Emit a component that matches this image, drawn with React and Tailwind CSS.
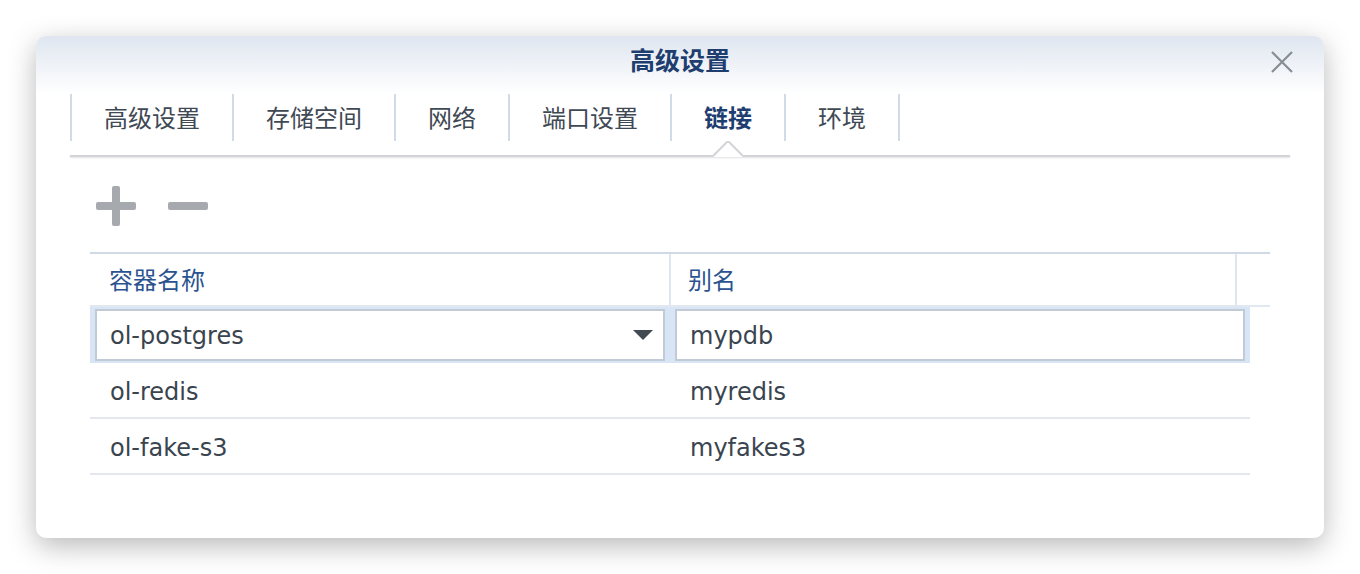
import React from "react";

const tabs = [
  { label: "高级设置", w: "w-[162px]" },
  { label: "存储空间", w: "w-[162px]" },
  { label: "网络", w: "w-[114px]" },
  { label: "端口设置", w: "w-[162px]" },
  { label: "链接", w: "w-[114px]", active: true },
  { label: "环境", w: "w-[114px]" },
];

const rows = [
  { name: "ol-redis", alias: "myredis" },
  { name: "ol-fake-s3", alias: "myfakes3" },
];

const App = () => {
  return (
    <div className="w-[1360px] h-[574px] bg-white pt-[36px] pl-[36px] font-['DejaVu_Sans','Noto_Sans_CJK_SC',sans-serif]">
      <div className="w-[1288px] h-[502px] rounded-[10px] bg-white shadow-[0_8px_28px_rgba(0,0,0,0.28)] overflow-hidden flex flex-col">
        {/* title bar */}
        <div className="h-[58px] shrink-0 bg-gradient-to-b from-[#dfe6f0] to-white flex items-center relative">
          <h1 className="w-full text-center text-[25px] font-bold text-[#1e3e70] pb-[6px]">高级设置</h1>
          <button className="absolute right-[30px] top-[14px] w-[24px] h-[24px]">
            <svg width="24" height="24" viewBox="0 0 24 24">
              <path d="M2 2 L22 22 M22 2 L2 22" stroke="#878d95" strokeWidth="2.2" />
            </svg>
          </button>
        </div>

        {/* tabs */}
        <div className="px-[34px]">
          <div className="flex h-[47px]">
            {tabs.map((t) => (
              <div
                key={t.label}
                className={`${t.w} border-l-2 border-[#cfdbe8] flex items-center justify-center text-[24px] pt-[2px] ${t.active ? "font-bold text-[#1e3e70]" : "text-[#3f4954]"}`}
              >
                {t.label}
              </div>
            ))}
            <div className="border-l-2 border-[#cfdbe8]" />
          </div>
          <div className="relative mt-[14px] h-[2px] bg-[#d2d4d7] shadow-[0_1px_2px_rgba(0,0,0,0.12)]">
            <svg className="absolute left-[643px] top-[-14px]" width="30" height="17" viewBox="0 0 30 17">
              <path d="M0 16 L15 1 L30 16 Z" fill="white" />
              <path d="M0 15 L15 0 L30 15" fill="none" stroke="#d2d4d7" strokeWidth="2" />
            </svg>
          </div>
        </div>

        {/* toolbar */}
        <div className="px-[60px] pt-[29px] flex gap-[32px] items-center">
          <svg width="40" height="40" viewBox="0 0 40 40">
            <rect x="0" y="16" width="40" height="8" rx="2" fill="#a6aaaf" />
            <rect x="16" y="0" width="8" height="40" rx="2" fill="#a6aaaf" />
          </svg>
          <svg width="40" height="40" viewBox="0 0 40 40">
            <rect x="0" y="16" width="40" height="8" rx="2" fill="#a6aaaf" />
          </svg>
        </div>

        {/* table */}
        <div className="px-[54px] pt-[26px]">
          <div className="border-t-2 border-[#d0dae6] border-b-2 border-b-[#e1e8f0] flex h-[55px]">
            <div className="w-[581px] flex items-center pl-[19px] pt-[3px] text-[24px] text-[#2b5390] border-r-2 border-[#dde7f2]">容器名称</div>
            <div className="w-[566px] flex items-center pl-[17px] pt-[3px] text-[24px] text-[#2b5390] border-r-2 border-[#dde7f2]">别名</div>
            <div className="flex-1" />
          </div>

          <div className="w-[1160px] bg-[#d8e5f7] px-[5px] py-[2px] flex gap-[10px]">
            <div className="w-[570px] h-[52px] bg-white border-2 border-[#c2cad5] flex items-center justify-between pl-[13px] pr-[10px] text-[24px] text-[#3a444f]">
              <span className="pt-[2px]">ol-postgres</span>
              <svg width="20" height="10" viewBox="0 0 20 10">
                <path d="M0 0 L20 0 L10 10 Z" fill="#414951" />
              </svg>
            </div>
            <div className="w-[570px] h-[52px] bg-white border-2 border-[#c2cad5] flex items-center pl-[13px] pt-[2px] text-[24px] text-[#3a444f]">
              mypdb
            </div>
          </div>

          {rows.map((r) => (
            <div key={r.name} className="w-[1160px] h-[56px] border-b-2 border-[#e3e8ee] flex items-center pt-[3px] text-[24px] text-[#3a444f]">
              <div className="w-[581px] pl-[20px]">{r.name}</div>
              <div className="pl-[19px]">{r.alias}</div>
            </div>
          ))}
        </div>
      </div>
    </div>
  );
};

export default App;
